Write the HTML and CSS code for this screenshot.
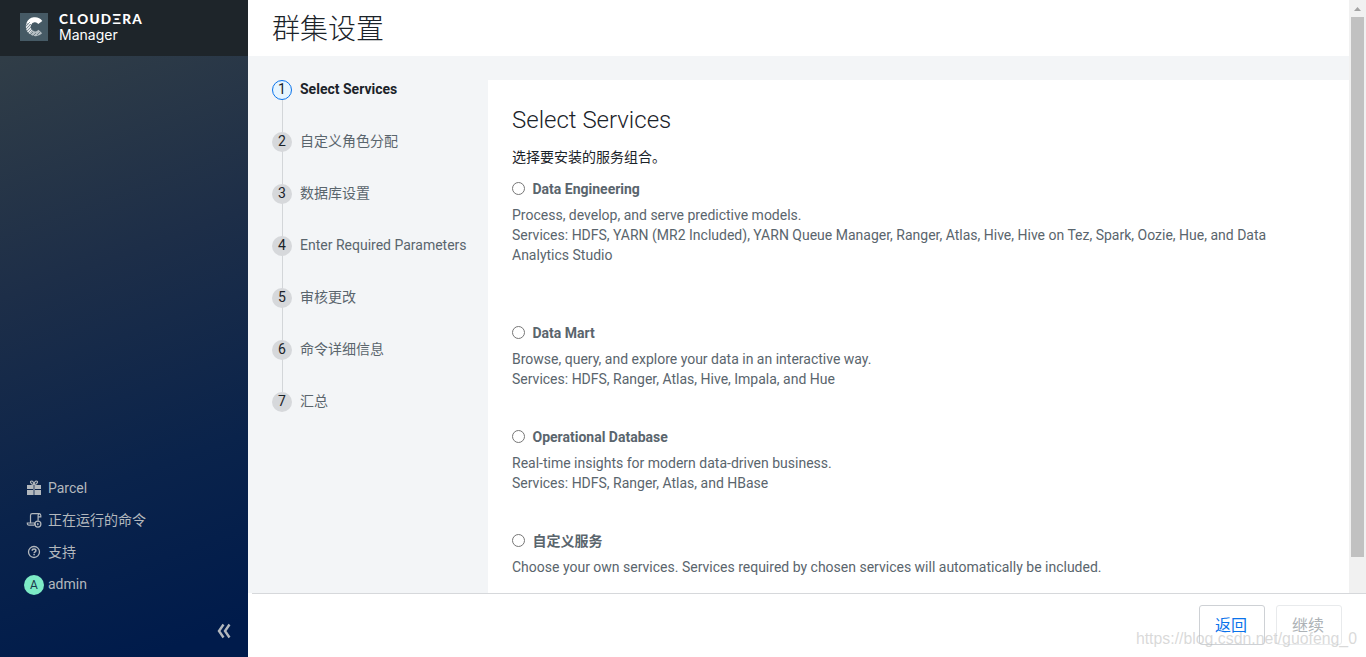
FILE: index.html
```html
<!DOCTYPE html>
<html lang="zh-CN">
<head>
    <meta charset="UTF-8">
    <meta name="viewport" content="width=device-width, initial-scale=1.0">
    <title>群集设置 - Cloudera Manager</title>
    <link rel="stylesheet" href="styles.css">
</head>
<body>
    <div class="sidebar">
        <div class="brand">
            <svg class="brand-logo" width="28" height="28" viewBox="0 0 28 28">
                <rect width="28" height="28" fill="#465a65"/>
                <path d="M20.300 9.500A6.600 6.600 0 0 0 8.800 11" fill="none" stroke="#fff" stroke-width="5"/>
                <path d="M8.800 11A6.600 6.600 0 0 0 11 19" fill="none" stroke="#dfe3e6" stroke-width="5"/>
                <path d="M11 19A6.600 6.600 0 0 0 20.300 18.500" fill="none" stroke="#b4bdc2" stroke-width="5"/>
                <path d="M5 14l5-5M5 17l6-6M6 19l5-5M7 21l5-5M10 22l3-3M13 23l3-3M17 22l3-3" stroke="#465a65" stroke-width=".6"/>
            </svg>
            <div class="brand-text">
                <div class="brand-name">CLOUDΞRA</div>
                <div class="brand-product">Manager</div>
            </div>
        </div>
        <ul class="side-menu">
            <li>
                <svg class="icon" width="20" height="20" viewBox="0 0 20 20" fill="currentColor">
                    <path d="M3 7h6v4H3zM11 7h6v4h-6zM3 12h6v5H3zM11 12h6v5h-6z"/>
                    <path d="M9 7h2v10H9z" opacity=".6"/>
                    <path d="M10 6.500C6.500 6.800 5.500 3 7.700 3 9 3 9.700 4.800 10 6.500 10.300 4.800 11 3 12.300 3c2.200 0 1.200 3.800-2.300 3.500z" fill="none" stroke="currentColor" stroke-width="1.200"/>
                </svg>
                Parcel
            </li>
            <li>
                <svg class="icon" width="20" height="20" viewBox="0 0 20 20" fill="none" stroke="currentColor" stroke-width="1.2">
                    <path d="M15.500 3.600H8.300c-1.100 0-1.800.8-1.800 1.900v7.700"/>
                    <path d="M15.300 3.600c-.8.200-1.200.9-1.200 1.900v5.200M15.300 3.600c1 0 1.500.7 1.500 2v1.300h-2.700"/>
                    <path d="M10.500 15.200H5c-1.100 0-1.700-.7-1.700-2.200h7.200c0 1.400.5 2 1.300 2.200"/>
                    <circle cx="13.900" cy="14.100" r="3"/>
                    <path d="M13.100 12.700v2.800l2.200-1.400z" fill="currentColor" stroke="none"/>
                </svg>
                正在运行的命令
            </li>
            <li>
                <svg class="icon" width="20" height="20" viewBox="0 0 20 20" fill="none" stroke="currentColor">
                    <circle cx="10" cy="10" r="5.500" stroke-width="1.300"/>
                    <path d="M8.200 8.700c0-2.200 3.700-2.200 3.700 0 0 1.200-1.800 1.200-1.800 2.500M10.100 12v1.300" stroke-width="1.500"/>
                </svg>
                支持
            </li>
            <li><span class="avatar">A</span>admin</li>
        </ul>
        <div class="collapse">
            <svg width="14" height="16" viewBox="0 0 14 16" fill="none" stroke="currentColor" stroke-width="2.400">
                <path d="M6.500 1.500L2 8l4.500 6.500M12.500 1.500L8 8l4.500 6.500"/>
            </svg>
        </div>
    </div>
    <div class="main">
        <div class="scroll-area">
            <div class="page">
                <h1>群集设置</h1>
                <div class="wizard">
                    <ol class="steps">
                        <li class="active"><span class="num">1</span>Select Services</li>
                        <li><span class="num">2</span>自定义角色分配</li>
                        <li><span class="num">3</span>数据库设置</li>
                        <li><span class="num">4</span>Enter Required Parameters</li>
                        <li><span class="num">5</span>审核更改</li>
                        <li><span class="num">6</span>命令详细信息</li>
                        <li><span class="num">7</span>汇总</li>
                    </ol>
                    <div class="panel">
                        <h2>Select Services</h2>
                        <p class="intro">选择要安装的服务组合。</p>
                        <div class="option tall">
                            <label><input type="radio" name="service">Data Engineering</label>
                            <p>Process, develop, and serve predictive models.<br>Services: HDFS, YARN (MR2 Included), YARN Queue Manager, Ranger, Atlas, Hive, Hive on Tez, Spark, Oozie, Hue, and Data Analytics Studio</p>
                        </div>
                        <div class="option">
                            <label><input type="radio" name="service">Data Mart</label>
                            <p>Browse, query, and explore your data in an interactive way.<br>Services: HDFS, Ranger, Atlas, Hive, Impala, and Hue</p>
                        </div>
                        <div class="option">
                            <label><input type="radio" name="service">Operational Database</label>
                            <p>Real-time insights for modern data-driven business.<br>Services: HDFS, Ranger, Atlas, and HBase</p>
                        </div>
                        <div class="option">
                            <label><input type="radio" name="service">自定义服务</label>
                            <p>Choose your own services. Services required by chosen services will automatically be included.</p>
                        </div>
                    </div>
                </div>
            </div>
            <div class="scrollbar">
                <svg width="17" height="17" viewBox="0 0 17 17"><path d="M5 11l3.500-4 3.500 4z" fill="#a3a3a3"/></svg>
                <div class="thumb"></div>
            </div>
        </div>
        <div class="footer">
            <button class="btn">返回</button>
            <button class="btn" disabled>继续</button>
        </div>
    </div>
    <div class="watermark">https://blog.csdn.net/guofeng_0</div>
</body>
</html>
```
FILE: styles.css
```css
* {
    box-sizing: border-box;
}
body {
    margin: 0;
    height: 657px;
    display: flex;
    overflow: hidden;
    font-family: Roboto, "Noto Sans CJK SC", sans-serif;
    font-size: 14px;
    line-height: 20px;
    color: #1b2329;
    background-color: #fff;
}
h1, h2, p, ul, ol {
    margin: 0;
    padding: 0;
}
li {
    list-style: none;
}

/* sidebar */
.sidebar {
    width: 248px;
    display: flex;
    flex-direction: column;
    color: #b3b8bd;
    background: linear-gradient(160deg, #303d47 8%, #1d2e48 40%, #0a234b 70%, #001b4b 95%);
}
.brand {
    height: 56px;
    padding: 13px 20px;
    display: flex;
    gap: 12px;
    background-color: #1e252a;
    color: #fff;
}
.brand-text {
    margin: -1px 0 0 -1px;
}
.brand-name {
    font-family: Lato, Inter, sans-serif;
    font-size: 13.5px;
    font-weight: 900;
    line-height: 15px;
    letter-spacing: 1.300px;
}
.brand-product {
    font-family: Inter, sans-serif;
    font-size: 14px;
    line-height: 16px;
}
.side-menu {
    margin-top: auto;
    padding-left: 24px;
}
.side-menu li {
    height: 32px;
    display: flex;
    align-items: center;
    gap: 4px;
}
.avatar {
    width: 20px;
    height: 20px;
    margin-top: 2px;
    border-radius: 50%;
    background-color: #7cebc6;
    color: #1b3a4b;
    font-size: 12px;
    text-align: center;
}
.collapse {
    height: 57px;
    padding: 23px 17px 0 0;
    text-align: right;
}
.collapse svg {
    display: block;
    margin-left: auto;
}

/* main area */
.main {
    flex: 1;
    min-width: 0;
    display: flex;
    flex-direction: column;
}
.scroll-area {
    height: 593px;
    display: flex;
    overflow: hidden;
}
.page {
    flex: 1;
    background-color: #f3f5f7;
}
h1 {
    height: 56px;
    padding: 2px 0 0 24px;
    background-color: #fff;
    font-size: 28px;
    font-weight: 300;
    line-height: 56px;
}
.wizard {
    display: flex;
    padding: 24px 0 0 24px;
}

/* steps */
.steps {
    width: 216px;
    color: #5a656d;
}
.steps li {
    height: 52px;
    display: flex;
    gap: 8px;
    line-height: 18px;
    background: linear-gradient(#d3d6d9, #d3d6d9) 10px 0 / 1px 100% no-repeat;
}
.steps li:last-child {
    background: none;
}
.steps .active {
    color: #1b2329;
    font-weight: 700;
}
.num {
    width: 20px;
    height: 20px;
    border-radius: 50%;
    background-color: #d6d8db;
    color: #1b2329;
    font-weight: 400;
    line-height: 19px;
    text-align: center;
}
.active .num {
    border: 1px solid #0a73eb;
    background-color: #e6f5ff;
    line-height: 17px;
}

/* service options */
.panel {
    flex: 1;
    height: 620px;
    padding: 24px;
    background-color: #fff;
}
h2 {
    font-size: 24px;
    font-weight: 300;
    line-height: 32px;
}
.intro {
    margin: 11px 0 12px;
}
.option {
    height: 104px;
    color: #5a656d;
}
.option.tall {
    height: 144px;
}
.option label {
    display: flex;
    align-items: center;
    font-weight: 700;
}
.option input {
    width: 13px;
    height: 13px;
    margin: 0 7.500px 2px 0;
}
.option p {
    width: 770px;
    margin-top: 6px;
}

/* scrollbar */
.scrollbar {
    width: 17px;
    background-color: #f1f1f1;
}
.scrollbar svg {
    display: block;
}
.thumb {
    width: 13px;
    height: 540px;
    margin: 0 auto;
    background-color: #c1c1c1;
}

/* footer */
.footer {
    height: 64px;
    margin-left: 4px;
    padding: 11px 24px 0 0;
    display: flex;
    justify-content: flex-end;
    gap: 11px;
    border-top: 1px solid #d6d8db;
}
.btn {
    width: 66px;
    height: 40px;
    padding: 0 2px 3px 0;
    border: 1px solid #ced1d5;
    border-radius: 3px;
    background-color: #fff;
    color: #0a73eb;
    font-family: inherit;
    font-size: 16px;
}
.btn:disabled {
    border-color: #e8eaec;
    color: #adb2b6;
}
.watermark {
    position: absolute;
    right: 9px;
    bottom: 8px;
    color: rgba(180, 180, 180, 0.5);
    font-family: "Liberation Sans", sans-serif;
    font-size: 15.850px;
}
```
